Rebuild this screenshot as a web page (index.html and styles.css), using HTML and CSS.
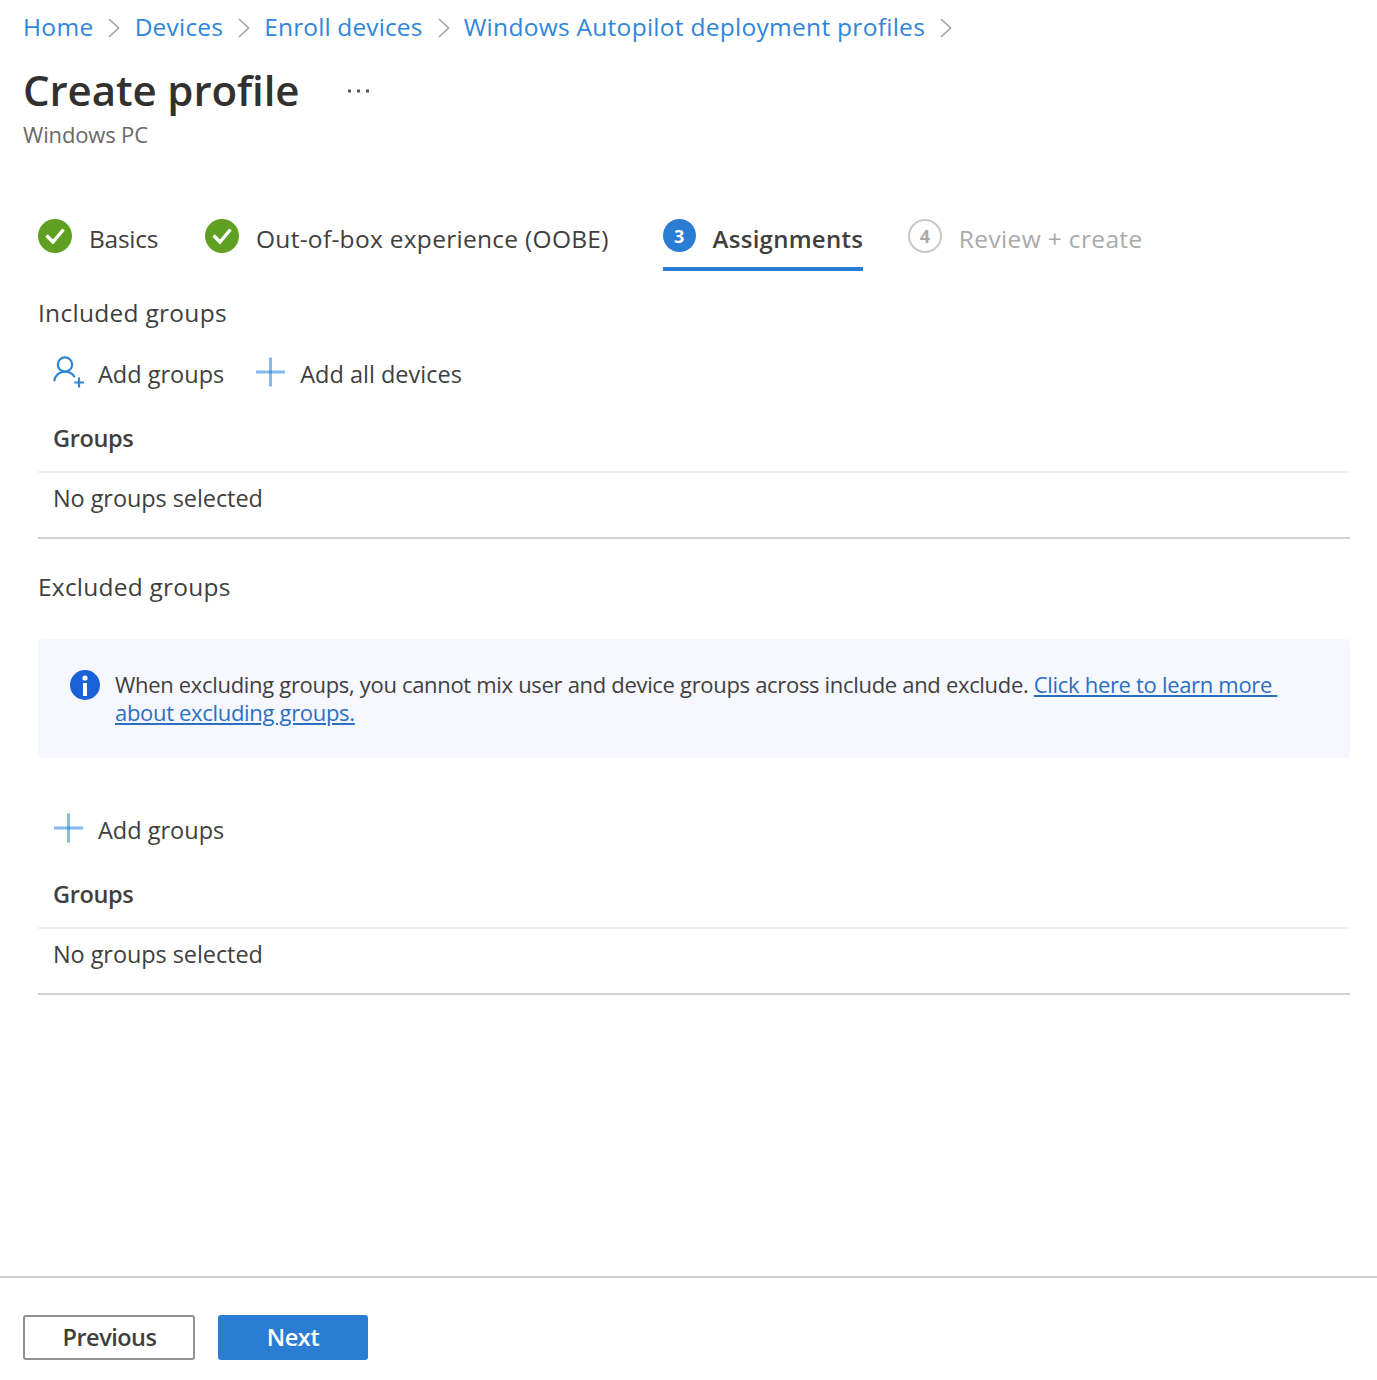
FILE: index.html
```html
<!DOCTYPE html>
<html lang="en">
<head>
<meta charset="utf-8">
<title>Create profile</title>
<link rel="stylesheet" href="styles.css">
</head>
<body>
<div class="page">
  <nav class="breadcrumb">
    <a class="t-home">Home</a>
    <svg class="chevron" viewBox="0 0 12 20"><path d="M1 1l9.500 9-9.500 9"/></svg>
    <a class="t-devices">Devices</a>
    <svg class="chevron" viewBox="0 0 12 20"><path d="M1 1l9.500 9-9.500 9"/></svg>
    <a class="t-enroll">Enroll devices</a>
    <svg class="chevron" viewBox="0 0 12 20"><path d="M1 1l9.500 9-9.500 9"/></svg>
    <a class="t-autopilot">Windows Autopilot deployment profiles</a>
    <svg class="chevron" viewBox="0 0 12 20"><path d="M1 1l9.500 9-9.500 9"/></svg>
  </nav>
  <header class="title-row">
    <h1>Create profile</h1>
    <svg class="more" viewBox="0 0 22 4"><path d="M0 .5h3v3H0zM9 .5h3v3H9zM18 .5h3v3h-3z"/></svg>
  </header>
  <p class="subtitle">Windows PC</p>

  <div class="steps">
    <div class="step step-basics">
      <svg class="badge" viewBox="0 0 34 34"><circle cx="17" cy="17" r="17" fill="#5fa023"/><path d="M8.500 16.500l6.500 6.500 10.500-12.500" fill="none" stroke="#fff" stroke-width="3.400"/></svg>
      <span>Basics</span>
    </div>
    <div class="step step-oobe">
      <svg class="badge" viewBox="0 0 34 34"><circle cx="17" cy="17" r="17" fill="#5fa023"/><path d="M8.500 16.500l6.500 6.500 10.500-12.500" fill="none" stroke="#fff" stroke-width="3.400"/></svg>
      <span>Out-of-box experience (OOBE)</span>
    </div>
    <div class="step step-assign active">
      <b class="badge num">3</b>
      <span>Assignments</span>
    </div>
    <div class="step step-review disabled">
      <b class="badge num">4</b>
      <span>Review + create</span>
    </div>
  </div>

  <main>
    <h2>Included groups</h2>
    <div class="commands">
      <button class="command">
        <svg class="icon" viewBox="0 0 32 32"><g fill="none" stroke="#2b88d8" stroke-width="2.200"><circle cx="12" cy="8.500" r="7.200"/><path d="M1.200 25.200C2 19.200 6.500 15.700 12 15.700c4.300 0 7.800 2 9.700 5.500M26 21.500v10M21.300 26.500h9.700"/></g></svg>
        <span>Add groups</span>
      </button>
      <button class="command">
        <svg class="icon" viewBox="0 0 32 32"><path d="M15.500 1.500v29M1 16h29" fill="none" stroke="#83bbec" stroke-width="3"/><path d="M14 16h3" stroke="#4a98dd" stroke-width="3"/></svg>
        <span>Add all devices</span>
      </button>
    </div>
    <div class="grid">
      <div class="grid-head">Groups</div>
      <div class="grid-row">No groups selected</div>
    </div>

    <h2 class="second">Excluded groups</h2>
    <div class="notice">
      <svg class="info" viewBox="0 0 30 30"><circle cx="15" cy="15" r="15" fill="#1b62d9"/><circle cx="15" cy="8" r="2.600" fill="#fff"/><path d="M15 13v13" stroke="#fff" stroke-width="4"/></svg>
      <p>When excluding groups, you cannot mix user and device groups across include and exclude. <a>Click here to learn more&nbsp;</a><br><a>about excluding groups.</a></p>
    </div>
    <div class="commands lower">
      <button class="command">
        <svg class="icon" viewBox="0 0 32 32"><path d="M15.500 1.500v29M1 16h29" fill="none" stroke="#83bbec" stroke-width="3"/><path d="M14 16h3" stroke="#4a98dd" stroke-width="3"/></svg>
        <span>Add groups</span>
      </button>
    </div>
    <div class="grid">
      <div class="grid-head">Groups</div>
      <div class="grid-row">No groups selected</div>
    </div>
  </main>

  <footer>
    <button class="btn previous">Previous</button>
    <button class="btn next">Next</button>
  </footer>
</div>
</body>
</html>
```
FILE: styles.css
```css
* { box-sizing: border-box; }
body { margin: 0; background: #fff; color: #403f3e; font: 24px/30px "Open Sans", "Noto Sans", sans-serif; }
h1, h2, p { margin: 0; font-weight: 400; }
button { font: inherit; color: inherit; background: none; border: 0; padding: 0; }

.page { display: flex; flex-direction: column; height: 1380px; }

.breadcrumb { display: flex; align-items: center; height: 32px; margin: 11px 0 0 23px; color: #2f86db; font-size: 24.5px; white-space: nowrap; }
.breadcrumb a { flex: none; }
.t-home { letter-spacing: .3px; }
.t-devices { letter-spacing: .2px; }
.t-enroll { letter-spacing: .12px; }
.t-autopilot { letter-spacing: .28px; }
.chevron { flex: none; width: 12px; height: 20px; margin: 2px 14.2px 0 15px; fill: none; stroke: #a3a3a3; stroke-width: 1.6; }

.title-row { display: flex; align-items: center; height: 56px; margin: 19px 0 0 23px; }
h1 { font-size: 42px; line-height: 56px; font-weight: 600; color: #323130; letter-spacing: -.1px; white-space: nowrap; }
.more { width: 22px; height: 4px; margin: 1px 0 0 49px; fill: #555; }
.subtitle { height: 30px; margin: 1px 0 0 23px; font-size: 22px; letter-spacing: -.15px; color: #6b6967; }

.steps { display: flex; height: 52px; margin: 70px 0 0 38px; font-size: 24.5px; white-space: nowrap; }
.step { display: flex; height: 52px; gap: 17px; }
.step span { padding-top: 5px; }
.badge { flex: none; width: 34px; height: 34px; }
.num { display: flex; align-items: center; justify-content: center; border-radius: 50%; font-size: 18px; font-weight: 700; letter-spacing: 0; }
.step-basics { letter-spacing: -.25px; }
.step-oobe { margin-left: 46.8px; letter-spacing: .29px; }
.step-assign { margin-left: 53.8px; font-size: 24px; letter-spacing: .27px; }
.step-review { margin-left: 44.6px; letter-spacing: .36px; }
.active { border-bottom: 4px solid #2b7cd3; font-weight: 600; }
.active .num { width: 33px; height: 33px; background: #2b7cd3; color: #fff; }
.disabled { color: #aaa; }
.disabled .num { border: 2px solid #c8c8c8; }

main { flex: 1; padding: 0 27px 0 38px; font-size: 23.5px; }
h2 { font-size: 24.5px; line-height: 30px; margin-top: 27px; letter-spacing: .28px; }
.second { margin-top: 33px; letter-spacing: .22px; }
.commands { display: flex; gap: 31px; margin: 28px 0 0 15px; }
.command { display: flex; gap: 13px; height: 36px; text-align: left; white-space: nowrap; }
.command span { padding-top: 3px; }
.icon { flex: none; width: 32px; height: 32px; }
.grid { margin-top: 31px; border-bottom: 2px solid #d2d2d2; letter-spacing: -.08px; }
.grid-head { height: 50px; padding-left: 15px; border-bottom: 2px solid #efefef; font-weight: 600; letter-spacing: -.35px; }
.grid-row { height: 64px; padding: 10px 0 0 15px; }
.notice { display: flex; gap: 15px; height: 119px; margin-top: 37px; padding: 31px 0 0 32px; background: #f6f7ff; border-radius: 4px; font-size: 22px; line-height: 28px; letter-spacing: -.315px; white-space: nowrap; }
.info { flex: none; width: 30px; height: 30px; }
.notice a { color: #2a70c2; text-decoration: underline; }
.lower { margin-top: 54px; }

footer { display: flex; gap: 23px; height: 104px; padding: 37px 0 0 23px; border-top: 2px solid #cfcfcf; font-size: 23.5px; }
.btn { height: 45px; padding-bottom: 1px; border-radius: 3px; font-weight: 600; letter-spacing: -.37px; }
.previous { width: 172px; padding-left: 1px; border: 2px solid #94928f; letter-spacing: -.5px; }
.next { width: 150px; background: #2b7cd3; color: #fff; }
```
